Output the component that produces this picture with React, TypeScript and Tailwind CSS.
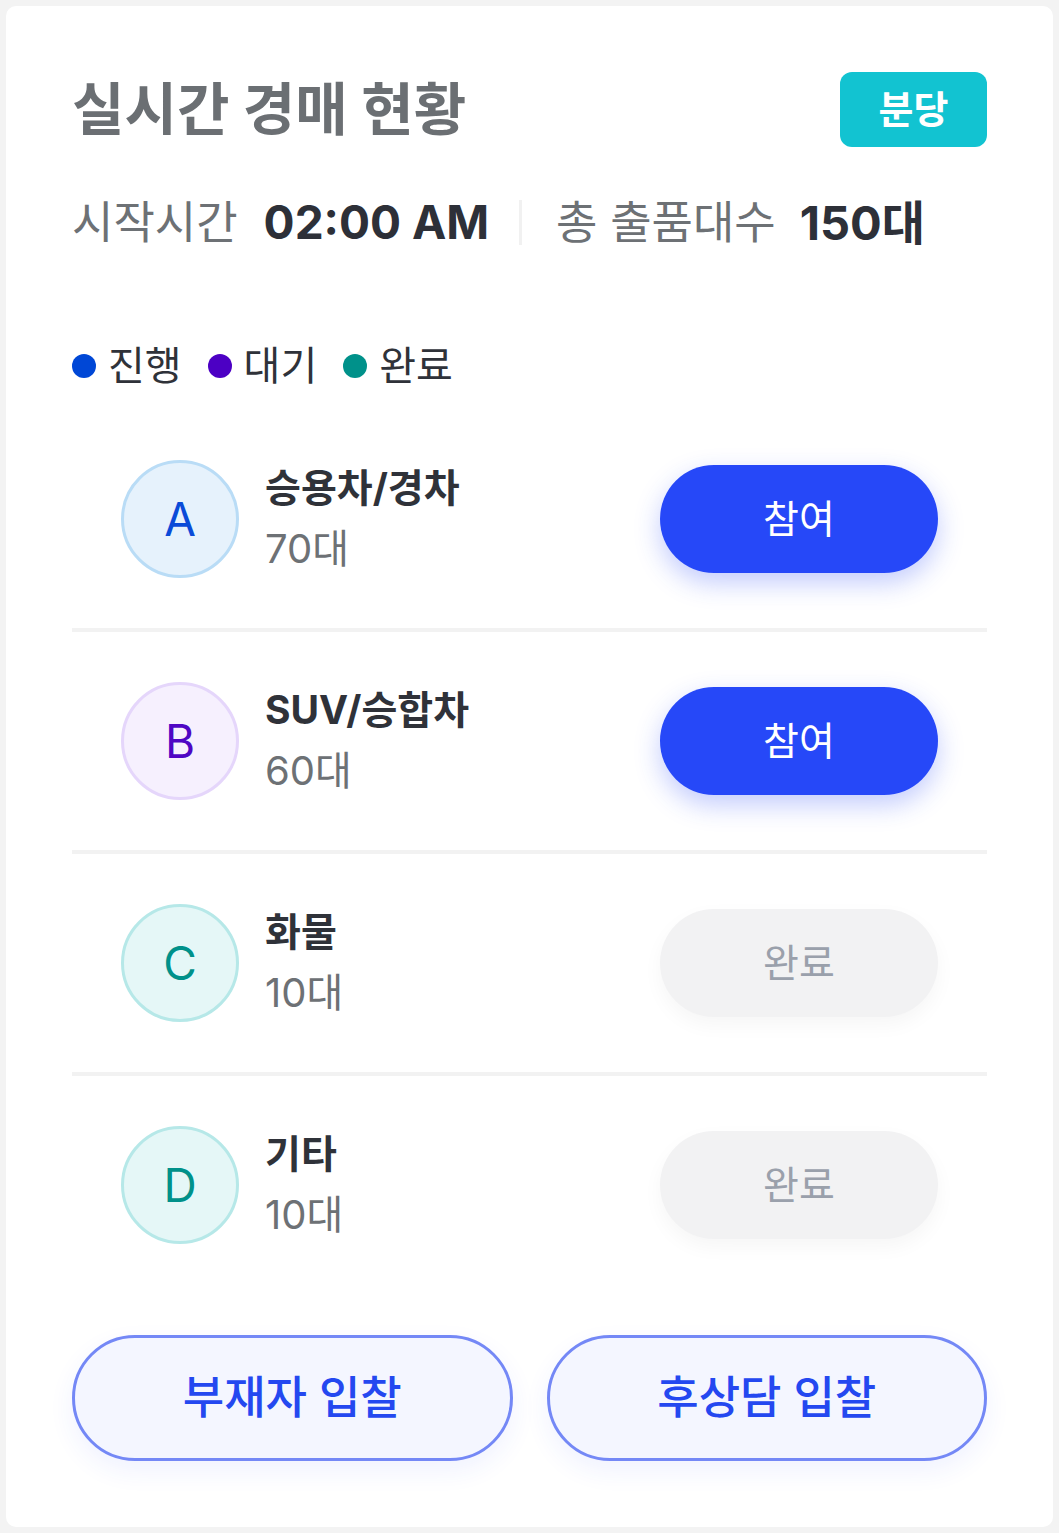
import React from 'react';

type Status = 'live' | 'wait' | 'done';

interface Lane {
  letter: string;
  name: string;
  count: string;
  tone: 'blue' | 'purple' | 'teal';
  status: Status;
}

const lanes: Lane[] = [
  { letter: 'A', name: '승용차/경차', count: '70대', tone: 'blue', status: 'live' },
  { letter: 'B', name: 'SUV/승합차', count: '60대', tone: 'purple', status: 'live' },
  { letter: 'C', name: '화물', count: '10대', tone: 'teal', status: 'done' },
  { letter: 'D', name: '기타', count: '10대', tone: 'teal', status: 'done' },
];

const circleTone = {
  blue: 'bg-[#e6f2fc] border-[#b9dcf6] text-[#0a4bd8]',
  purple: 'bg-[#f6f0fe] border-[#e5d6fb] text-[#4f06c4]',
  teal: 'bg-[#e5f7f7] border-[#b6e8e8] text-[#00918a]',
};

const font = { fontFamily: 'Inter, "Noto Sans CJK KR", sans-serif' };

const LaneRow: React.FC<{ lane: Lane; last: boolean }> = ({ lane, last }) => (
  <div>
    <div className="flex items-center justify-between px-[49px] py-[50px]">
      <div className="flex items-center gap-[26px]">
        <div
          className={`flex h-[118px] w-[118px] items-center justify-center rounded-full border-[3px] text-[46px] leading-none ${circleTone[lane.tone]}`}
        >
          {lane.letter}
        </div>
        <div className="flex flex-col gap-[20px]">
          <span className="text-[39px] font-bold leading-[40px] text-[#2f3239]">{lane.name}</span>
          <span className="text-[40px] leading-[42px] text-[#6d7175]">{lane.count}</span>
        </div>
      </div>
      {lane.status === 'done' ? (
        <button className="flex h-[108px] w-[278px] items-center justify-center rounded-full bg-[#f2f2f3] text-[39px] text-[#9aa0ab] shadow-[0_8px_20px_rgba(0,0,0,0.04)]">
          완료
        </button>
      ) : (
        <button className="flex h-[108px] w-[278px] items-center justify-center rounded-full bg-[#2648f8] text-[39px] text-white shadow-[0_10px_26px_rgba(38,72,248,0.28)]">
          참여
        </button>
      )}
    </div>
    {!last && <div className="h-[4px] bg-[#f2f2f2]" />}
  </div>
);

export default function App() {
  return (
    <div className="min-h-screen bg-[#f3f3f3] p-[6px]" style={font}>
      <div className="rounded-[10px] bg-white px-[66px] pb-[66px] pt-[66px]">
        <div className="flex h-[75px] items-center justify-between">
          <h1 className="text-[57px] font-bold leading-none text-[#6b6f73]">실시간 경매 현황</h1>
          <span className="flex h-[75px] w-[147px] items-center justify-center rounded-[12px] bg-[#12c3d1] text-[38px] font-bold text-white">
            분당
          </span>
        </div>

        <div className="mt-[47px] flex h-[56px] items-center">
          <span className="text-[45px] leading-none text-[#6d7175]">시작시간</span>
          <span className="ml-[26px] text-[46px] font-bold leading-none text-[#2d3038]">02:00 AM</span>
          <span className="ml-[30px] mr-[34px] h-[45px] w-[3px] bg-[#f1f1f1]" />
          <span className="text-[45px] leading-none text-[#6d7175]">총 출품대수</span>
          <span className="ml-[24px] text-[47px] font-bold leading-none text-[#2d3038]">150대</span>
        </div>

        <div className="mt-[94px] flex h-[44px] items-center gap-[26px] text-[40px] leading-none text-[#2f3239]">
          <div className="flex items-center gap-[12px]">
            <span className="h-[24px] w-[24px] rounded-full bg-[#0047d6]" />
            진행
          </div>
          <div className="flex items-center gap-[12px]">
            <span className="h-[24px] w-[24px] rounded-full bg-[#4c00c4]" />
            대기
          </div>
          <div className="flex items-center gap-[12px]">
            <span className="h-[24px] w-[24px] rounded-full bg-[#00918a]" />
            완료
          </div>
        </div>

        <div className="mt-[22px]">
          {lanes.map((lane, i) => (
            <LaneRow key={lane.letter} lane={lane} last={i === lanes.length - 1} />
          ))}
        </div>

        <div className="mt-[41px] grid grid-cols-2 gap-[34px]">
          <button className="h-[126px] rounded-full border-[3px] border-[#7488f6] bg-[#f4f6ff] text-[45px] font-medium text-[#2448f0] shadow-[0_10px_26px_rgba(38,72,248,0.07)]">
            부재자 입찰
          </button>
          <button className="h-[126px] rounded-full border-[3px] border-[#7488f6] bg-[#f4f6ff] text-[45px] font-medium text-[#2448f0] shadow-[0_10px_26px_rgba(38,72,248,0.07)]">
            후상담 입찰
          </button>
        </div>
      </div>
    </div>
  );
}
